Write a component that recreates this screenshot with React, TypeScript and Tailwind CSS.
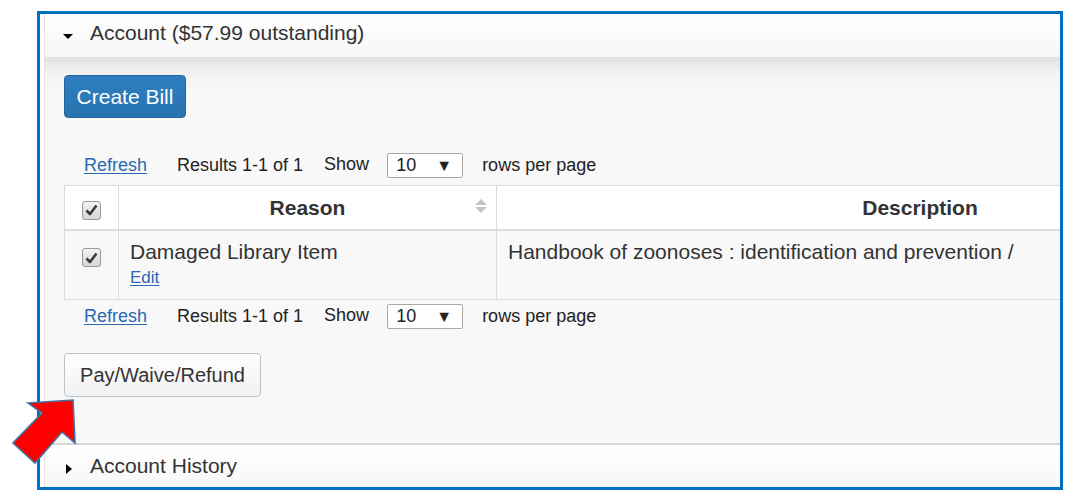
import React from 'react';

const font = "font-['Liberation_Sans',Arial,sans-serif]";

function Check() {
  return (
    <span className="inline-flex h-[19px] w-[19px] items-center justify-center rounded-[3px] border border-[#9a9a9a] bg-[linear-gradient(#f2f2f2,#d6d6d6)]">
      <svg width="13" height="12" viewBox="0 0 13 12">
        <path d="M1.5 6.5 L5 10 L11.5 1.5" fill="none" stroke="#3a3a3a" strokeWidth="2.6" strokeLinejoin="round" />
      </svg>
    </span>
  );
}

function Pager() {
  return (
    <div className="flex items-center pl-[20px] text-[18px] text-[#222]">
      <a href="#" className="text-[#2a68b4] underline underline-offset-2">Refresh</a>
      <span className="ml-[30px]">Results 1-1 of 1</span>
      <span className="ml-[21px] -mt-[3px]">Show</span>
      <div className="ml-[18px] flex h-[25px] w-[76px] items-center justify-between rounded-[2px] border border-[#a9a9a9] bg-white pl-[8px] pr-[10px]">
        <span>10</span>
        <span className="text-[16px]">▼</span>
      </div>
      <span className="ml-[19px]">rows per page</span>
    </div>
  );
}

export default function App() {
  return (
    <div className={`relative h-[504px] w-[1078px] overflow-hidden bg-white ${font} text-[#333]`}>
      <div className="ml-[37px] mt-[11px] h-[479px] w-[1026px] border-[3px] border-[#0070c0] bg-white pl-[4px]">
        <div className="flex h-full flex-col overflow-hidden border-l border-[#e2e2e2]">
          {/* Account header */}
          <div className="flex h-[43px] shrink-0 items-center bg-[linear-gradient(#ffffff,#f6f6f6)] pl-[18px]">
            <span className="mt-[1px] h-0 w-0 border-x-[5px] border-t-[5px] border-x-transparent border-t-black" />
            <span className="-mt-[5px] ml-[17px] text-[21px] text-[#333]">Account ($57.99 outstanding)</span>
          </div>

          {/* Account body */}
          <div className="flex flex-1 flex-col bg-[linear-gradient(#e2e2e2,#f4f4f4_18px,#f8f8f8_34px)] pl-[19px] pt-[18px]">
            <button className="h-[43px] w-[122px] rounded-[4px] border border-[#25649a] bg-[linear-gradient(#2f7fc0,#2773b1)] text-[21px] text-white">
              Create Bill
            </button>

            <div className="mt-[34px]">
              <Pager />
            </div>

            <table className="mt-[6px] w-[1280px] shrink-0 table-fixed border-collapse text-[21px]">
              <colgroup>
                <col className="w-[54px]" />
                <col className="w-[378px]" />
                <col />
              </colgroup>
              <thead>
                <tr className="h-[44px] bg-white">
                  <th className="border border-[#dcdcdc] border-b-2 align-top pt-[7px]">
                    <Check />
                  </th>
                  <th className="relative border border-[#dcdcdc] border-b-2 font-bold text-[#333]">
                    Reason
                    <span className="absolute right-[9px] top-[13px] flex flex-col items-center gap-[2px]">
                      <span className="h-0 w-0 border-x-[6px] border-b-[6px] border-x-transparent border-b-[#c4c4c4]" />
                      <span className="h-0 w-0 border-x-[6px] border-t-[6px] border-x-transparent border-t-[#c4c4c4]" />
                    </span>
                  </th>
                  <th className="border border-[#dcdcdc] border-b-2 font-bold text-[#333]">Description</th>
                </tr>
              </thead>
              <tbody>
                <tr className="h-[70px] bg-[#f8f8f8]">
                  <td className="border border-[#dcdcdc] pt-[10px] text-center align-top">
                    <Check />
                  </td>
                  <td className="border border-[#dcdcdc] pl-[11px] pt-[9px] align-top leading-[24px]">
                    <div>Damaged Library Item</div>
                    <a href="#" className="text-[17px] leading-[20px] text-[#2a68b4] underline underline-offset-2">Edit</a>
                  </td>
                  <td className="border border-[#dcdcdc] pl-[11px] pt-[9px] align-top leading-[24px]">
                    Handbook of zoonoses : identification and prevention /
                  </td>
                </tr>
              </tbody>
            </table>

            <div className="mt-[3px]">
              <Pager />
            </div>

            <button className="mt-[23px] h-[44px] w-[197px] rounded-[4px] border border-[#b9c2cb] bg-[linear-gradient(#ffffff,#f1f1f1)] text-[20px] text-[#333]">
              Pay/Waive/Refund
            </button>
          </div>

          {/* Account History header */}
          <div className="flex h-[44px] shrink-0 items-center border-t-2 border-[#d6d6d6] bg-[linear-gradient(#ffffff,#f7f7f7)] pl-[21px]">
            <span className="mt-[6px] h-0 w-0 border-y-[5px] border-l-[6px] border-y-transparent border-l-black" />
            <span className="ml-[18px] text-[21px] text-[#333]">Account History</span>
          </div>
        </div>
      </div>

      {/* red pointer arrow overlay */}
      <svg className="absolute left-0 top-0" width="90" height="504" viewBox="0 0 90 504">
        <polygon
          points="28,403 73,400 75,443 62,432 35,463 13,443 42,413"
          fill="#ff0000"
          stroke="#41719c"
          strokeWidth="1.6"
          strokeLinejoin="miter"
        />
      </svg>
    </div>
  );
}
